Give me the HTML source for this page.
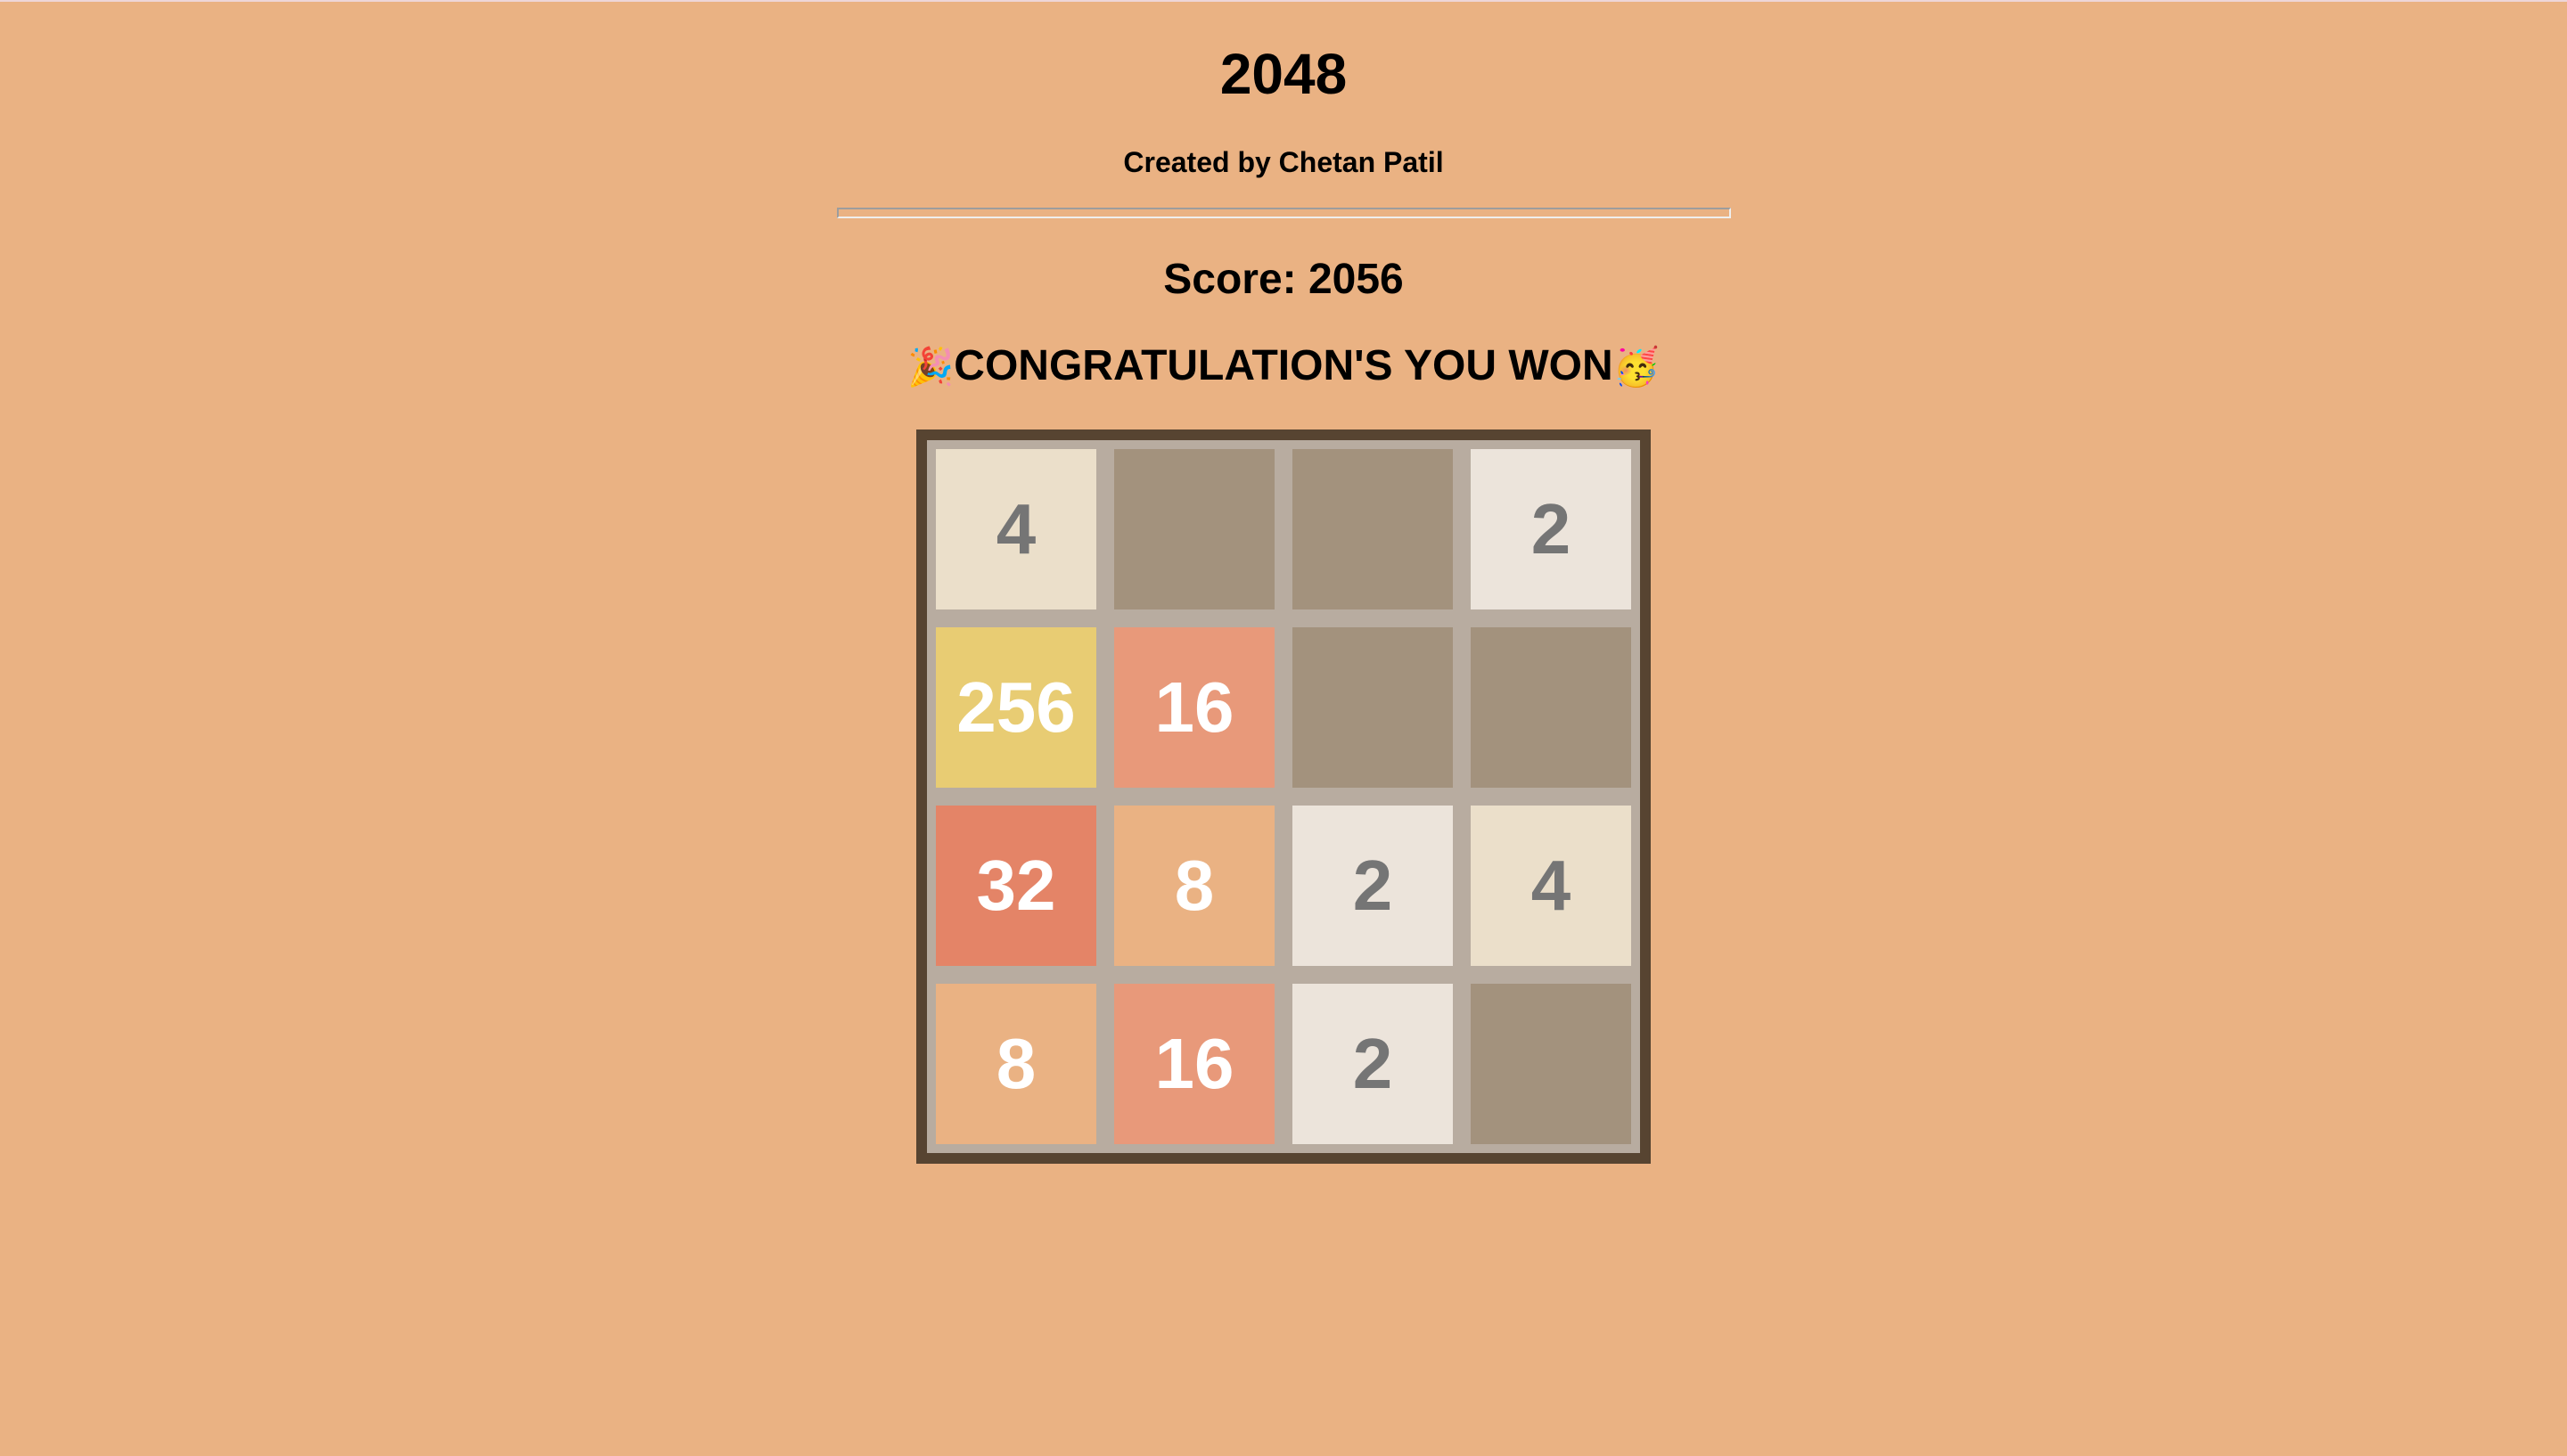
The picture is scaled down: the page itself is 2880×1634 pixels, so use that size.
<!DOCTYPE html>
<html><head><meta charset="utf-8"><style>
html,body{margin:0;padding:0;}
body{width:2880px;height:1634px;background:#EAB283;position:relative;overflow:hidden;font-family:"Liberation Sans",Arial,sans-serif;font-weight:bold;color:#000;}
.topline{position:absolute;left:0;top:0;width:2880px;height:2px;background:#eed6d8;}
.t{position:absolute;left:0;width:2880px;text-align:center;white-space:nowrap;}
.em{font-size:42px;}
.hr{position:absolute;left:939px;top:233px;width:999px;height:8px;border-top:2px solid #9d9d9d;border-left:2px solid #9d9d9d;border-right:2px solid #eee;border-bottom:2px solid #eee;}
.board{position:absolute;left:1028px;top:482px;width:800px;height:800px;border:12px solid #574431;background:#B8ACA0;}
.tile{position:absolute;width:180px;height:180px;display:flex;align-items:center;justify-content:center;font-size:80px;color:#fff;}
.e{background:#A3927D;}
.v2{background:#ECE4DB;color:#757575;}
.v4{background:#EBDFCA;color:#757575;}
.v8{background:#EAB283;}
.v16{background:#E8997A;}
.v32{background:#E48467;}
.v256{background:#E8CC73;}
</style></head><body>
<div class="topline"></div>
<div class="t" style="top:46px;font-size:64px;line-height:74px;">2048</div>
<div class="t" style="top:162px;font-size:32px;line-height:40px;">Created by Chetan Patil</div>
<div class="hr"></div>
<div class="t" style="top:286px;font-size:48px;line-height:56px;">Score: 2056</div>
<div class="t" style="top:383px;font-size:48px;line-height:56px;"><span class="em">🎉</span>CONGRATULATION'S YOU WON<span class="em">🥳</span></div>
<div class="board">
<div class="tile v4" style="left:10px;top:10px;">4</div>
<div class="tile e" style="left:210px;top:10px;"></div>
<div class="tile e" style="left:410px;top:10px;"></div>
<div class="tile v2" style="left:610px;top:10px;">2</div>
<div class="tile v256" style="left:10px;top:210px;">256</div>
<div class="tile v16" style="left:210px;top:210px;">16</div>
<div class="tile e" style="left:410px;top:210px;"></div>
<div class="tile e" style="left:610px;top:210px;"></div>
<div class="tile v32" style="left:10px;top:410px;">32</div>
<div class="tile v8" style="left:210px;top:410px;">8</div>
<div class="tile v2" style="left:410px;top:410px;">2</div>
<div class="tile v4" style="left:610px;top:410px;">4</div>
<div class="tile v8" style="left:10px;top:610px;">8</div>
<div class="tile v16" style="left:210px;top:610px;">16</div>
<div class="tile v2" style="left:410px;top:610px;">2</div>
<div class="tile e" style="left:610px;top:610px;"></div>
</div>
</body></html>
